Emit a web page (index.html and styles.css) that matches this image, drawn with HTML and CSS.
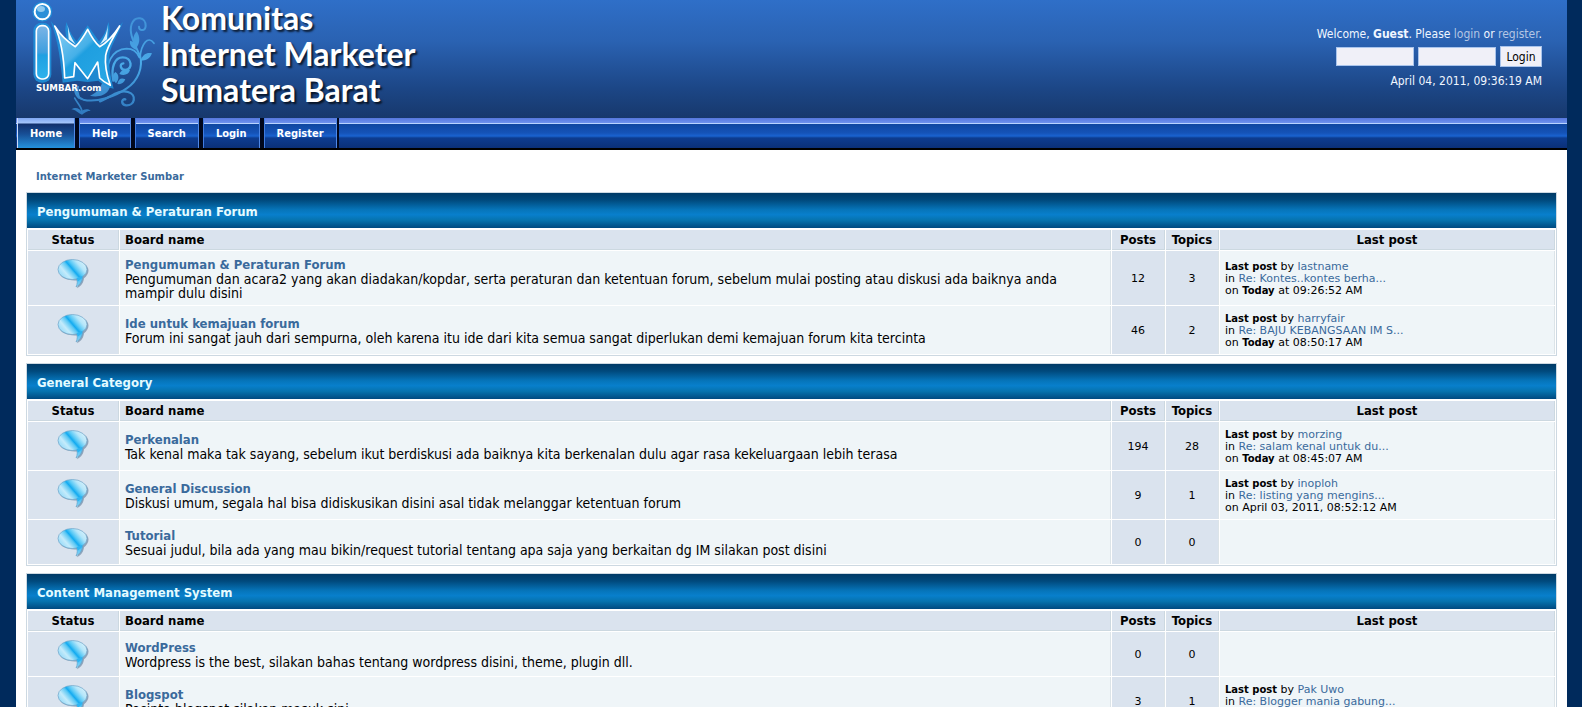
FILE: index.html
```html
<!DOCTYPE html>
<html lang="id">
<head>
    <meta charset="UTF-8">
    <meta name="viewport" content="width=device-width, initial-scale=1.0">
    <title>Internet Marketer Sumbar</title>
    <link rel="stylesheet" href="styles.css">
</head>
<body>

<!-- shared bubble icon -->
<svg class="defs" width="0" height="0" aria-hidden="true">
    <defs>
        <linearGradient id="bubbleFill" gradientUnits="userSpaceOnUse" x1="5" y1="21" x2="26" y2="3">
            <stop offset="0" stop-color="#8fd8f8"/>
            <stop offset="0.25" stop-color="#c4ebfb"/>
            <stop offset="0.45" stop-color="#5cc8f4"/>
            <stop offset="0.52" stop-color="#12aaf0"/>
            <stop offset="0.62" stop-color="#55c8f6"/>
            <stop offset="0.8" stop-color="#b4e6fa"/>
            <stop offset="1" stop-color="#d4f0fb"/>
        </linearGradient>
        <linearGradient id="tailFill" x1="0" y1="0" x2="0" y2="1">
            <stop offset="0" stop-color="#2cb4f2"/>
            <stop offset="1" stop-color="#8fd8f8"/>
        </linearGradient>
        <symbol id="bubble" viewBox="0 0 32 32">
            <path d="M17 3C8.500 3 2 7 2 13s7 9.500 16 9.500c1.500 0 2.500 0 3.500-.3.400 3-.5 5.500-1.500 8 4.500-2.500 6.500-5.500 7-10C29.500 18.500 31.500 15.500 31.500 12.500 31.500 7 25 3 17 3z" fill="#3f6688" opacity="0.5"/>
            <path d="M19 19.500c1.800 3 1.400 6.500 0 9.500 4.500-2.500 6.500-6 7-12z" fill="url(#tailFill)" stroke="#5f9cc4" stroke-width="0.6"/>
            <ellipse cx="15.500" cy="11.500" rx="14.500" ry="10" fill="url(#bubbleFill)" stroke="#6fa3c7" stroke-width="0.7"/>
            <path d="M19.500 20c2-.3 4.500-1.200 6-2.500l-.8 3-3.700 3z" fill="#2cb4f2"/>
        </symbol>
    </defs>
</svg>

<div class="page">
    <header class="header">
        <div class="brand">
            <svg class="logo" viewBox="0 0 420 354" role="img" aria-label="IM Sumbar">
                <defs>
                    <linearGradient id="vine" gradientUnits="userSpaceOnUse" x1="0" y1="40" x2="0" y2="345">
                        <stop offset="0" stop-color="#3f8fd6"/>
                        <stop offset="0.5" stop-color="#4aaae8"/>
                        <stop offset="1" stop-color="#2f78be"/>
                    </linearGradient>
                    <linearGradient id="crown" x1="0" y1="0" x2="1" y2="1">
                        <stop offset="0" stop-color="#8fd0f5"/>
                        <stop offset="0.4" stop-color="#45b0e8"/>
                        <stop offset="0.45" stop-color="#1f9fe0"/>
                        <stop offset="1" stop-color="#2aaae6"/>
                    </linearGradient>
                    <linearGradient id="stem" x1="0" y1="0" x2="0" y2="1">
                        <stop offset="0" stop-color="#7cb5e6"/>
                        <stop offset="0.5" stop-color="#3f9fdf"/>
                        <stop offset="0.55" stop-color="#1fa0e2"/>
                        <stop offset="1" stop-color="#2db2ec"/>
                    </linearGradient>
                </defs>
                <g fill="none" stroke="url(#vine)" stroke-linecap="round">
                    <path d="M360 168C345 132 325 102 335 72c10-26 43-22 42 6-1 16-21 16-20 2" stroke-width="6"/>
                    <path d="M360 172c4-40 24-68 42-42" stroke-width="5"/>
                    <path d="M360 165c10 38-6 78-40 100-34 24-90 44-130 34-18-6-24-22-16-38" stroke-width="6"/>
                    <path d="M262 250c-8-60 14-102 58-104 20 0 32 12 38 26" stroke-width="5"/>
                    <path d="M280 242c-8-40 4-70 28-70 28 0 32 36 8 38-16 0-18-20-6-20" stroke-width="7"/>
                    <path d="M240 304c34-14 56-36 84-28 28 8 20 42-6 40-16-2-14-20-2-18" stroke-width="7"/>
                    <path d="M186 334c-2-14-14-24-22-40" stroke-width="5"/>
                </g>
                <g fill="url(#vine)">
                    <path d="M348 146c-14-18-10-38 2-52 10 16 12 34-2 52zM350 150c-16-6-22-16-20-28 14 4 22 14 20 28zM362 182c6-20 20-26 34-22-6 16-18 22-34 22z"/>
                    <path d="M298 222c6-14 18-16 32-12-4 14-18 18-32 12zM288 250c-12-12-12-24-2-34 12 8 12 22 2 34zM292 252c4-16 12-20 24-14-4 10-12 16-24 14z"/>
                    <path d="M250 215c30 10 26 40 14 58-10 14-34 20-54 14 24-10 44-34 40-72z"/>
                    <path d="M186 344c-12-4-20-16-32-16 14-8 24-2 30 6 8-8 20-8 28-2-10 0-18 6-26 12zM178 298c-14-12-18-24-14-38 12 10 16 22 14 38z"/>
                </g>
                <path d="M92 62c18 26 34 42 48 54-4-18-6-32 0-50 6 24 18 44 30 58l33-48 34 48c14-16 22-32 28-58 6 18 4 32 0 48 14-12 26-28 44-48-14 38-34 66-40 94-4 34 2 68 12 106-20-4-34-14-46-24l-32 4-32-4-43 6c-6-60-12-120-36-186z" fill="#1f93dc" opacity="0.85"/>
                <path d="M143 74c4 28 14 46 27 62l-24-18zM264 74c-4 28-14 46-27 62l24-18z" fill="#d9f1fd"/>
                <path d="M104 78c18 28 36 46 62 62 14-14 26-32 37-52 10 20 20 38 36 52 26-14 42-34 60-62-20 38-38 62-42 88-4 34 4 62 14 90-12-6-22-12-32-22l-6-48-30 50-38-48-4 42-27 4c-2-54-8-110-30-156z" fill="url(#crown)" stroke="#fff" stroke-width="5" stroke-linejoin="round"/>
                <circle cx="67" cy="35" r="30" fill="#1f93dc" opacity="0.8"/>
                <circle cx="67" cy="35" r="23" fill="#2a8fd8" stroke="#fff" stroke-width="6"/>
                <ellipse cx="63" cy="27" rx="12" ry="9" fill="#a9d8f5" opacity="0.8"/>
                <rect x="40" y="68" width="54" height="180" rx="25" fill="#1f93dc" opacity="0.85"/>
                <rect x="49" y="77" width="37" height="160" rx="16" fill="url(#stem)" stroke="#fff" stroke-width="5"/>
                <text class="logo-text" x="48" y="273">SUMBAR.com</text>
            </svg>
            <h1>Komunitas<br>Internet Marketer<br>Sumatera Barat</h1>
        </div>
        <form class="user-box">
            <p>Welcome, <b>Guest</b>. Please <a href="#">login</a> or <a href="#">register</a>.</p>
            <div class="fields">
                <input type="text" name="user" aria-label="Username">
                <input type="password" name="passwrd" aria-label="Password">
                <button type="submit">Login</button>
            </div>
            <p>April 04, 2011, 09:36:19 AM</p>
        </form>
    </header>

    <nav class="menu">
        <a class="active" href="#">Home</a>
        <a href="#">Help</a>
        <a href="#">Search</a>
        <a href="#">Login</a>
        <a href="#">Register</a>
    </nav>

    <main class="content">
        <div class="crumbs"><a href="#">Internet Marketer Sumbar</a></div>

        <section class="category">
            <h2>Pengumuman &amp; Peraturan Forum</h2>
            <table>
                <tr>
                    <th class="status">Status</th>
                    <th class="board">Board name</th>
                    <th class="count">Posts</th>
                    <th class="count">Topics</th>
                    <th class="last">Last post</th>
                </tr>
                <tr>
                    <td class="status"><svg><use href="#bubble"/></svg></td>
                    <td class="board"><a href="#">Pengumuman &amp; Peraturan Forum</a><p>Pengumuman dan acara2 yang akan diadakan/kopdar, serta peraturan dan ketentuan forum, sebelum mulai posting atau diskusi ada baiknya anda mampir dulu disini</p></td>
                    <td class="count">12</td>
                    <td class="count">3</td>
                    <td class="last"><b>Last post</b> by <a href="#">lastname</a><br>in <a href="#">Re: Kontes..kontes berha...</a><br>on <b>Today</b> at 09:26:52 AM</td>
                </tr>
                <tr>
                    <td class="status"><svg><use href="#bubble"/></svg></td>
                    <td class="board"><a href="#">Ide untuk kemajuan forum</a><p>Forum ini sangat jauh dari sempurna, oleh karena itu ide dari kita semua sangat diperlukan demi kemajuan forum kita tercinta</p></td>
                    <td class="count">46</td>
                    <td class="count">2</td>
                    <td class="last"><b>Last post</b> by <a href="#">harryfair</a><br>in <a href="#">Re: BAJU KEBANGSAAN IM S...</a><br>on <b>Today</b> at 08:50:17 AM</td>
                </tr>
            </table>
        </section>

        <section class="category">
            <h2>General Category</h2>
            <table>
                <tr>
                    <th class="status">Status</th>
                    <th class="board">Board name</th>
                    <th class="count">Posts</th>
                    <th class="count">Topics</th>
                    <th class="last">Last post</th>
                </tr>
                <tr>
                    <td class="status"><svg><use href="#bubble"/></svg></td>
                    <td class="board"><a href="#">Perkenalan</a><p>Tak kenal maka tak sayang, sebelum ikut berdiskusi ada baiknya kita berkenalan dulu agar rasa kekeluargaan lebih terasa</p></td>
                    <td class="count">194</td>
                    <td class="count">28</td>
                    <td class="last"><b>Last post</b> by <a href="#">morzing</a><br>in <a href="#">Re: salam kenal untuk du...</a><br>on <b>Today</b> at 08:45:07 AM</td>
                </tr>
                <tr>
                    <td class="status"><svg><use href="#bubble"/></svg></td>
                    <td class="board"><a href="#">General Discussion</a><p>Diskusi umum, segala hal bisa didiskusikan disini asal tidak melanggar ketentuan forum</p></td>
                    <td class="count">9</td>
                    <td class="count">1</td>
                    <td class="last"><b>Last post</b> by <a href="#">inoploh</a><br>in <a href="#">Re: listing yang mengins...</a><br>on April 03, 2011, 08:52:12 AM</td>
                </tr>
                <tr>
                    <td class="status"><svg><use href="#bubble"/></svg></td>
                    <td class="board"><a href="#">Tutorial</a><p>Sesuai judul, bila ada yang mau bikin/request tutorial tentang apa saja yang berkaitan dg IM silakan post disini</p></td>
                    <td class="count">0</td>
                    <td class="count">0</td>
                    <td class="last"></td>
                </tr>
            </table>
        </section>

        <section class="category">
            <h2>Content Management System</h2>
            <table>
                <tr>
                    <th class="status">Status</th>
                    <th class="board">Board name</th>
                    <th class="count">Posts</th>
                    <th class="count">Topics</th>
                    <th class="last">Last post</th>
                </tr>
                <tr>
                    <td class="status"><svg><use href="#bubble"/></svg></td>
                    <td class="board"><a href="#">WordPress</a><p>Wordpress is the best, silakan bahas tentang wordpress disini, theme, plugin dll.</p></td>
                    <td class="count">0</td>
                    <td class="count">0</td>
                    <td class="last"></td>
                </tr>
                <tr>
                    <td class="status"><svg><use href="#bubble"/></svg></td>
                    <td class="board"><a href="#">Blogspot</a><p>Pecinta blogspot silakan masuk sini</p></td>
                    <td class="count">3</td>
                    <td class="count">1</td>
                    <td class="last"><b>Last post</b> by <a href="#">Pak Uwo</a><br>in <a href="#">Re: Blogger mania gabung...</a><br>on <b>Today</b></td>
                </tr>
            </table>
        </section>
    </main>
</div>

</body>
</html>
```
FILE: styles.css
```css
* {
    box-sizing: border-box;
}
body {
    margin: 0;
    padding: 0 15px 0 16px;
    background-color: #002a5c;
    font-family: "DejaVu Sans", Verdana, sans-serif;
    font-size: 12px;
    line-height: 14px;
    color: #000;
}
a {
    color: #3a6a9c;
    text-decoration: none;
}
.defs {
    display: block;
}
.page {
    background-color: #fff;
}

/* header */
.header {
    display: flex;
    justify-content: space-between;
    height: 118px;
    background: linear-gradient(#2f6fc8 0%, #2a62b2 35%, #1c4686 75%, #17386c 100%);
}
.brand {
    display: flex;
    padding-left: 4px;
}
.logo {
    width: 140px;
    height: 118px;
}
.logo-text {
    font-family: "DejaVu Sans", sans-serif;
    font-size: 26px;
    font-weight: bold;
    fill: #fff;
}
.brand h1 {
    margin: 0;
    padding-left: 1px;
    font-family: Lato, sans-serif;
    font-size: 32px;
    font-weight: bold;
    line-height: 36px;
    color: #fff;
    text-shadow: 2px 2px 2px rgba(0, 0, 0, 0.7);
}
.user-box {
    padding: 26px 25px 0 0;
    font-family: "DejaVu Sans Condensed", Tahoma, sans-serif;
    line-height: 16px;
    text-align: right;
    color: #f0f6ff;
}
.user-box p {
    margin: 0;
}
.user-box a {
    color: #b4c6e4;
}
.fields {
    display: flex;
    justify-content: flex-end;
    align-items: center;
    gap: 4px;
    margin: 4px 0 6px;
}
.fields input {
    width: 78px;
    height: 19px;
    border: 1px solid #a9c4ec;
    background-color: #f0f0f8;
}
.fields button {
    width: 42px;
    height: 21px;
    padding: 0;
    border: 1px solid #a9c4ec;
    background-color: #f0f0f8;
    font-family: inherit;
    font-size: 12px;
}

/* menu */
.menu {
    display: flex;
    padding-left: 1px;
    border-bottom: 2px solid #000;
    background: linear-gradient(#5577dd 0, #6f93ee 5px, #b9d4ff 5px, #b9d4ff 6px, #0f47a0 6px, #1553b8 15px, #1a63d0 18px, #0d3c90 20px, #0b3078 30px);
}
.menu a {
    height: 30px;
    padding: 9px 13px 0;
    border-right: 4px solid #00071c;
    box-shadow: inset 1px 0 #3f7be0, inset -1px 0 #4f88e6;
    font-family: "DejaVu Sans Condensed", Tahoma, sans-serif;
    font-size: 11px;
    font-weight: bold;
    color: #fff;
}
.menu a:last-child {
    border-right-width: 2px;
}
.menu .active {
    background: linear-gradient(#7fa6f2 0, #a5c6fb 5px, #12306c 6px, #174f96 16px, #2592dc 30px);
    box-shadow: inset 1px 0 #c9dcfa, inset -1px 0 #4f88e6;
}

/* boards */
.content {
    padding: 18px 10px;
}
.crumbs {
    padding: 2px 10px 8px;
    font-size: 10px;
    font-weight: bold;
}
.category {
    margin-bottom: 7px;
    border: 1px solid #cdd9e2;
}
.category h2 {
    margin: 0 0 1px;
    padding: 12px 10px 9px;
    background: linear-gradient(#003a66 0%, #00497c 20%, #0675ba 48%, #087fcc 62%, #0673ae 78%, #004a80 100%);
    font-family: "DejaVu Sans Condensed", Verdana, sans-serif;
    font-size: 13px;
    line-height: 14px;
    color: #e4fbff;
}
table {
    width: 100%;
    table-layout: fixed;
    border-spacing: 1px;
}
th {
    height: 20px;
    padding: 1px 5px 0;
    border: solid #ccd8e0;
    border-width: 0 1px 1px 0;
    background-color: #dae3ee;
    font-family: "DejaVu Sans Condensed", Verdana, sans-serif;
    font-size: 13px;
}
td {
    padding: 7px 5px 5px;
    border: solid #dce4e8;
    border-width: 0 1px 0 0;
    background-color: #eff5f8;
}
.status {
    width: 91px;
    text-align: center;
}
.board {
    font-family: "DejaVu Sans Condensed", Verdana, sans-serif;
    text-align: left;
}
.board a {
    display: block;
    font-size: 13px;
    font-weight: bold;
}
.board p {
    margin: 0;
    font-size: 14px;
}
.count {
    width: 53px;
    text-align: center;
}
th.count {
    padding: 1px 0 0;
}
.last {
    width: 22%;
}
td.status,
td.count {
    background-color: #dae3ee;
}
td.status {
    vertical-align: top;
}
td.status svg {
    display: block;
    width: 32px;
    height: 32px;
    margin: 0 auto;
}
td.count,
td.last {
    font-size: 11px;
    line-height: 12px;
}
td.last b {
    font-size: 10px;
}
```
